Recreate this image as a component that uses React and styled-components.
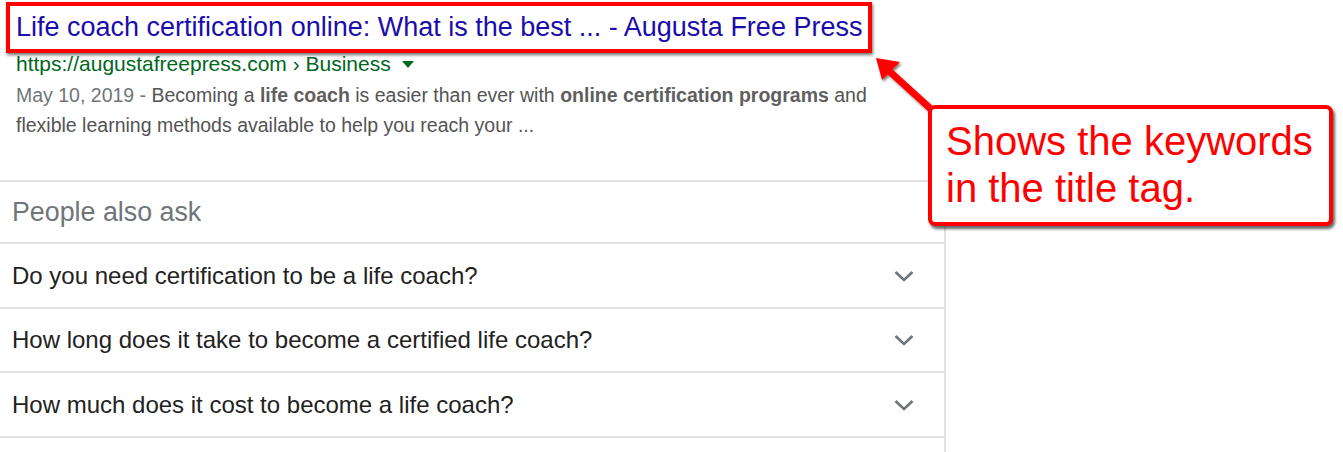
import React from "react";
import styled, { createGlobalStyle } from "styled-components";

const Global = createGlobalStyle`
  html, body { margin: 0; padding: 0; background: #fff; }
  body { font-family: "Liberation Sans", Arial, sans-serif; }
`;

const Page = styled.div`
  position: relative;
  width: 1343px;
  height: 452px;
  overflow: hidden;
  background: #fff;
`;

const Column = styled.div`
  width: 946px;
  display: flex;
  flex-direction: column;
`;

const Result = styled.div`
  display: flex;
  flex-direction: column;
  align-items: flex-start;
  padding: 2px 0 0 6px;
  height: 180px;
  box-sizing: border-box;
`;

const TitleBox = styled.div`
  border: 4px solid #ff0000;
  box-shadow: 1px 2px 3px rgba(0, 0, 0, 0.55);
  padding: 0 6px 0 6px;
  height: 43px;
  display: flex;
  align-items: center;
`;

const Title = styled.a`
  font-size: 27px;
  color: #1a0dab;
  text-decoration: none;
  white-space: nowrap;
  line-height: 1;
`;

const Url = styled.div`
  margin: 0 0 0 10px;
  font-size: 21px;
  line-height: 22px;
  color: #006621;
  display: flex;
  align-items: center;
  white-space: nowrap;
`;

const Caret = styled.span`
  display: inline-block;
  margin-left: 11px;
  width: 0;
  height: 0;
  border-left: 6px solid transparent;
  border-right: 6px solid transparent;
  border-top: 7px solid #006621;
  margin-top: 1px;
`;

const Snippet = styled.p`
  margin: 5px 0 0 10px;
  font-size: 19.5px;
  line-height: 30px;
  color: #545454;
  width: 880px;
`;

const Strong = styled.strong`
  font-weight: bold;
  color: #5f5f5f;
`;

const DateText = styled.span`
  color: #70757a;
`;

const Paa = styled.div`
  border-top: 2px solid #e2e2e4;
  border-right: 2px solid #e2e2e4;
  display: flex;
  flex-direction: column;
  height: 272px;
  box-sizing: border-box;
`;

const PaaHeader = styled.div`
  height: 62px;
  padding-left: 12px;
  display: flex;
  align-items: center;
  font-size: 26.8px;
  color: #70757a;
  border-bottom: 2px solid #e2e2e4;
  box-sizing: border-box;
`;

const Question = styled.div`
  height: ${(p) => p.$h}px;
  box-sizing: border-box;
  border-bottom: 2px solid #e2e2e4;
  padding: 0 28px 0 12px;
  display: flex;
  align-items: center;
  justify-content: space-between;
  font-size: 24px;
  color: #222;
`;

const Chevron = styled.svg`
  width: 24px;
  height: 24px;
  flex: none;
`;

const Callout = styled.div`
  position: absolute;
  left: 928px;
  top: 105px;
  width: 405px;
  height: 121px;
  box-sizing: border-box;
  border: 4px solid #ff0000;
  border-radius: 7px;
  background: #fff;
  box-shadow: 2px 3px 3px rgba(0, 0, 0, 0.6);
  padding: 9px 0 0 14px;
  font-size: 40px;
  line-height: 47px;
  color: #ff0000;
  white-space: nowrap;
`;

const Arrow = styled.svg`
  position: absolute;
  left: 860px;
  top: 40px;
  overflow: visible;
`;

const questions = [
  ["Do you need certification to be a life coach?", 65],
  ["How long does it take to become a certified life coach?", 64],
  ["How much does it cost to become a life coach?", 65],
];

export default function App() {
  return (
    <>
      <Global />
      <Page>
        <Column>
          <Result>
            <TitleBox>
              <Title>Life coach certification online: What is the best ... - Augusta Free Press</Title>
            </TitleBox>
            <Url>
              https://augustafreepress.com › Business
              <Caret />
            </Url>
            <Snippet>
              <DateText>May 10, 2019 - </DateText>Becoming a <Strong>life coach</Strong> is easier than ever with{" "}
              <Strong>online certification programs</Strong> and flexible learning methods available to help you reach your ...
            </Snippet>
          </Result>
          <Paa>
            <PaaHeader>People also ask</PaaHeader>
            {questions.map(([q, h]) => (
              <Question key={q} $h={h}>
                <span>{q}</span>
                <Chevron viewBox="0 0 24 24">
                  <path d="M3.5 8 L12 16 L20.5 8" fill="none" stroke="#70757a" strokeWidth="2.6" />
                </Chevron>
              </Question>
            ))}
          </Paa>
        </Column>
        <Arrow width="80" height="80">
          <defs>
            <filter id="sh" x="-20%" y="-20%" width="140%" height="140%">
              <feDropShadow dx="1.5" dy="2" stdDeviation="1" floodColor="#000" floodOpacity="0.5" />
            </filter>
          </defs>
          <g filter="url(#sh)">
            <line x1="72" y1="70" x2="28" y2="30" stroke="#ff0000" strokeWidth="7" strokeLinecap="round" />
            <polygon points="16,18 40,22 22,40" fill="#ff0000" />
          </g>
        </Arrow>
        <Callout>
          Shows the keywords
          <br />
          in the title tag.
        </Callout>
      </Page>
    </>
  );
}
